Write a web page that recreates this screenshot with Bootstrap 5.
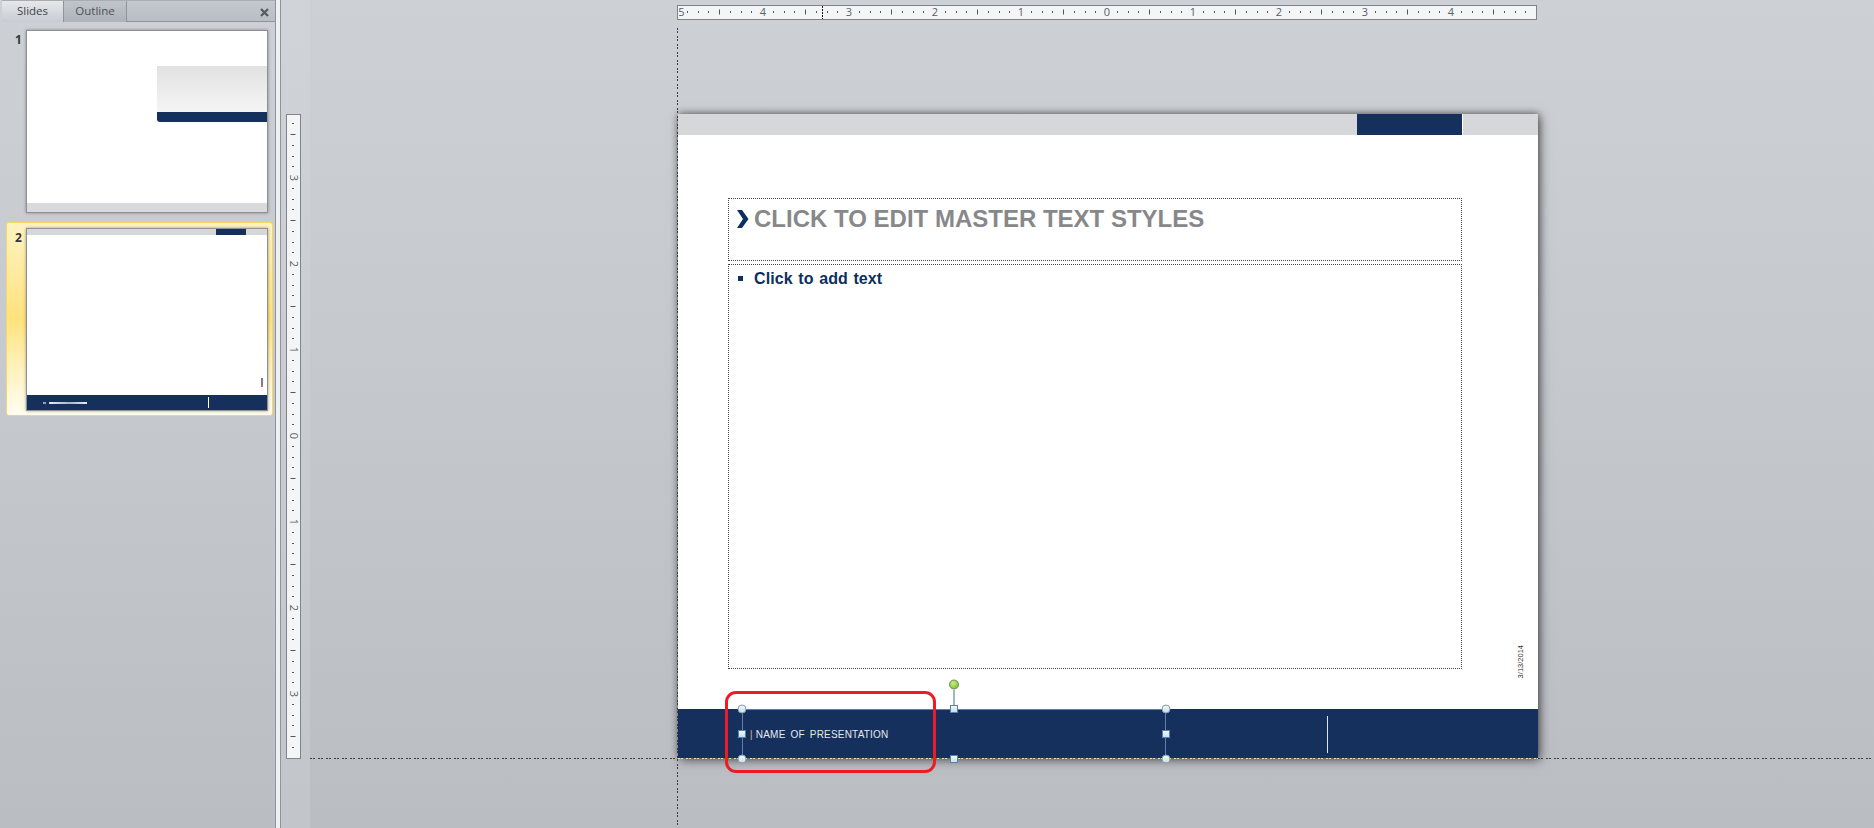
<!DOCTYPE html>
<html lang="en">
<head>
<meta charset="utf-8">
<title>Slide Master</title>
<link rel="stylesheet" href="https://cdn.jsdelivr.net/npm/bootstrap@5.3.0/dist/css/bootstrap.min.css">
<style>
html,body{height:100%;}
body{background:#c4c7cc;font-family:"Liberation Sans",Arial,sans-serif;overflow:hidden;}
.pp-app{height:828px;width:1874px;position:relative;}
.pp-side{width:276px;flex:none;background:linear-gradient(180deg,#cdd0d5 0,#c5c8cd 50%,#babdc2 100%);border-right:1px solid #8f949b;padding-left:2px;}
.pp-tabs{height:22px;background:linear-gradient(180deg,#c4c8ce,#b9bdc4);border-bottom:1px solid #90959c;border-top:1px solid #a9adb3;position:relative;flex:none;}
.pp-tab{font:11.5px "Open Sans",sans-serif;line-height:20px;height:21px;text-align:center;color:#3d434a;border-right:1px solid #8f949b;}
.pp-tab-on{width:62px;background:linear-gradient(180deg,#e6e8eb,#c8ccd2);margin-bottom:-1px;}
.pp-tab-off{width:63px;color:#4c525a;background:linear-gradient(180deg,#c0c5cb,#aeb3ba);}
.pp-close{margin-left:auto;margin-right:6px;width:9px;height:9px;margin-top:7px;}
.pp-num{font:bold 12px "Open Sans",sans-serif;color:#33363b;flex:none;}
.pp-row1{padding:8px 0 0 4px;height:194px;flex:none;}
.pp-num1{padding:1px 0 0 9px;width:20px;}
.pp-row2{margin:6px 2px 0 4px;height:194px;border:1px solid #f5d768;border-radius:3px;background:linear-gradient(180deg,#fff3c2 0,#ffe27e 50%,#fff0b4 72%,#fffdf2 100%);padding-top:5px;}
.pp-num2{padding:1px 0 0 8px;width:19px;}
.pp-thumb{width:242px;height:183px;background:#fff;border:1px solid #8d9197;box-shadow:0 0 3px rgba(0,0,0,.35);flex:none;}
.pp-t1-mid{height:181px;}
.pp-t1-hero{margin:35px 0 0 130px;height:46px;background:linear-gradient(180deg,#e1e1e1,#f5f5f5);}
.pp-t1-band{margin-left:130px;height:10px;background:#15305c;border-bottom-left-radius:3px;}
.pp-t1-foot{height:9px;margin-top:81px;background:#d9dadb;}
.pp-t2-top{height:6px;background:#d6d7d9;flex:none;}
.pp-t2-navy{width:30px;margin-left:189px;background:#15305c;height:6px;}
.pp-t2-mid{height:160px;flex:none;}
.pp-t2-date{width:2px;height:9px;background:linear-gradient(180deg,#6f7fa8,#a07a70);margin:143px 4px 0 auto;}
.pp-t2-foot{height:15px;flex:none;background:#15305c;color:#fff;}
.pp-t2-txt{width:44px;height:2px;margin-left:16px;background:linear-gradient(90deg,#8fa0bd 0,#8fa0bd 6%,#15305c 8%,#15305c 13%,#e8ebf1 15%,#aab5c8 60%,#e8ebf1 100%);}
.pp-t2-bar{width:1px;height:11px;background:#fff;margin-left:121px;}
.pp-split{width:5px;flex:none;background:#eef0f2;border-right:1px solid #8f949b;}
.pp-rulercol{width:29px;flex:none;background:linear-gradient(180deg,#d0d3d8,#c2c5ca);padding:114px 0 0 5px;}
.pp-vruler{width:15px;height:645px;background:#f4f5f6;border:1px solid #7f848b;display:block;}
.pp-canvas{flex-grow:1;background:linear-gradient(180deg,#cdd0d5 0,#c9ccd1 25%,#babdc2 100%);}
.pp-hruler{width:860px;height:15px;background:#f4f5f6;border:1px solid #7f848b;margin:5px 0 0 367px;display:block;box-sizing:border-box;}
.pp-rt{font:11px "Open Sans",sans-serif;fill:#5a5e66;}
.pp-slide{width:860px;height:644px;margin:94px 0 0 368px;background:#fff;box-shadow:2px 2px 10px rgba(0,0,0,.55),0 -1px 6px rgba(0,0,0,.3);}
.pp-top{height:21px;background:#d6d7d9;flex:none;}
.pp-top-navy{width:105px;margin-left:679px;background:#15305c;border-right:0;}
.pp-top-gap{width:1px;background:#fff;}
.pp-body{flex-grow:1;padding-left:50px;}
.pp-ph{width:734px;border:1px dotted #444;}
.pp-ph-title{height:63px;margin-top:63px;padding:7px 0 0 8px;font-weight:bold;font-size:24px;line-height:26px;color:#87888a;gap:5px;}
.pp-ph-body{height:405px;margin-top:3px;padding:4px 0 0 9px;font-weight:bold;font-size:16px;line-height:20px;color:#0b2f5f;word-spacing:1px;gap:11px;letter-spacing:.1px;}
.pp-bullet{width:5px;height:5px;background:#0b2f5f;flex:none;margin-top:7px;}
.pp-date{writing-mode:vertical-rl;transform:rotate(180deg);font-size:7.5px;line-height:9px;color:#3a3036;align-self:flex-end;margin:0 13px 31px auto;}
.pp-foot{height:49px;flex:none;background:#15305c;color:#e6e9ef;padding:1px 0 0 59px;font-size:10px;word-spacing:2px;letter-spacing:.2px;}
.pp-foot-bar{color:#d9a679;margin:0 3px 0 7px;font-size:11px;}
.pp-foot-line{width:1px;height:37px;background:#dfe5ef;margin:0 210px 0 auto;flex:none;}
.pp-overlay{position:absolute;inset:0;width:1874px;height:828px;pointer-events:none;}
.pp-note{position:absolute;left:725px;top:691px;width:211px;height:82px;border:3px solid #ed1c24;border-radius:11px;}
</style>
</head>
<body>
<div class="pp-app d-flex">
  <aside class="pp-side d-flex flex-column">
    <div class="pp-tabs d-flex">
      <div class="pp-tab pp-tab-on">Slides</div>
      <div class="pp-tab pp-tab-off">Outline</div>
      <svg class="pp-close" viewBox="0 0 9 9"><path d="M1 1 8 8M8 1 1 8" stroke="#555a61" stroke-width="2.2"/></svg>
    </div>
    <div class="pp-row1 d-flex">
      <div class="pp-num pp-num1">1</div>
      <div class="pp-thumb">
        <div class="pp-t1-mid">
          <div class="pp-t1-hero"></div>
          <div class="pp-t1-band"></div>
          <div class="pp-t1-foot"></div>
        </div>
      </div>
    </div>
    <div class="pp-row2 d-flex">
      <div class="pp-num pp-num2">2</div>
      <div class="pp-thumb d-flex flex-column">
        <div class="pp-t2-top"><div class="pp-t2-navy"></div></div>
        <div class="pp-t2-mid d-flex"><div class="pp-t2-date"></div></div>
        <div class="pp-t2-foot d-flex align-items-center"><div class="pp-t2-txt"></div><div class="pp-t2-bar"></div></div>
      </div>
    </div>
  </aside>
  <div class="pp-split"></div>
  <div class="pp-rulercol">
    <svg class="pp-vruler" width="15" height="645" viewBox="0 0 13 643">
      <defs>
        <pattern id="vt" width="15" height="86" patternUnits="userSpaceOnUse" patternTransform="translate(0,63)">
          <rect x="5" y="10" width="2" height="1" fill="#555"/><rect x="5" y="21" width="2" height="1" fill="#555"/><rect x="5" y="31" width="2" height="1" fill="#555"/>
          <rect x="3.5" y="42" width="5" height="1" fill="#555"/>
          <rect x="5" y="53" width="2" height="1" fill="#555"/><rect x="5" y="64" width="2" height="1" fill="#555"/><rect x="5" y="74" width="2" height="1" fill="#555"/>
        </pattern>
      </defs>
      <rect width="13" height="643" fill="url(#vt)"/>
      <text class="pp-rt" text-anchor="middle" transform="translate(2.5,63) rotate(90)">3</text>
      <text class="pp-rt" text-anchor="middle" transform="translate(2.5,149) rotate(90)">2</text>
      <text class="pp-rt" text-anchor="middle" transform="translate(2.5,235) rotate(90)">1</text>
      <text class="pp-rt" text-anchor="middle" transform="translate(2.5,321) rotate(90)">0</text>
      <text class="pp-rt" text-anchor="middle" transform="translate(2.5,407) rotate(90)">1</text>
      <text class="pp-rt" text-anchor="middle" transform="translate(2.5,493) rotate(90)">2</text>
      <text class="pp-rt" text-anchor="middle" transform="translate(2.5,579) rotate(90)">3</text>
    </svg>
  </div>
  <main class="pp-canvas">
    <svg class="pp-hruler" width="860" height="15" viewBox="0 0 858 13">
      <defs>
        <pattern id="ht" width="86" height="15" patternUnits="userSpaceOnUse" patternTransform="translate(-1,0)">
          <rect x="10" y="5" width="1" height="2" fill="#555"/><rect x="21" y="5" width="1" height="2" fill="#555"/><rect x="31" y="5" width="1" height="2" fill="#555"/>
          <rect x="42" y="3.5" width="1" height="5" fill="#555"/>
          <rect x="53" y="5" width="1" height="2" fill="#555"/><rect x="64" y="5" width="1" height="2" fill="#555"/><rect x="74" y="5" width="1" height="2" fill="#555"/>
        </pattern>
      </defs>
      <rect width="858" height="13" fill="url(#ht)"/>
      <rect x="0" y="4" width="8" height="6" fill="#f4f5f6"/>
      <g text-anchor="middle">
        <text class="pp-rt" x="3.5" y="10">5</text>
        <text class="pp-rt" x="85" y="10">4</text>
        <text class="pp-rt" x="171" y="10">3</text>
        <text class="pp-rt" x="257" y="10">2</text>
        <text class="pp-rt" x="343" y="10">1</text>
        <text class="pp-rt" x="429" y="10">0</text>
        <text class="pp-rt" x="515" y="10">1</text>
        <text class="pp-rt" x="601" y="10">2</text>
        <text class="pp-rt" x="687" y="10">3</text>
        <text class="pp-rt" x="773" y="10">4</text>
      </g>
      <path d="M144.5 0V13" stroke="#111" stroke-dasharray="2 1"/>
    </svg>
    <section class="pp-slide d-flex flex-column">
      <div class="pp-top d-flex">
        <div class="pp-top-navy"></div>
        <div class="pp-top-gap"></div>
      </div>
      <div class="pp-body d-flex">
        <div class="d-flex flex-column">
          <div class="pp-ph pp-ph-title d-flex align-items-start">
            <svg width="12" height="18" viewBox="0 0 12 18" class="flex-none mt-1"><path d="M0 0H5L11.5 9 5 18H0L6 9Z" fill="#0b2f5f"/></svg>
            <span class="pp-title-txt">CLICK TO EDIT MASTER TEXT STYLES</span>
          </div>
          <div class="pp-ph pp-ph-body d-flex align-items-start">
            <span class="pp-bullet"></span>
            <span>Click to add text</span>
          </div>
        </div>
        <div class="pp-date">3/13/2014</div>
      </div>
      <div class="pp-foot d-flex align-items-center">
        <span>1</span><span class="pp-foot-bar">|</span><span>NAME OF PRESENTATION</span>
        <div class="pp-foot-line"></div>
      </div>
    </section>
  </main>
  <svg class="pp-overlay" viewBox="0 0 1874 828">
    <defs>
      <linearGradient id="hg" x1="0" y1="0" x2="0" y2="1"><stop offset="0" stop-color="#f4fbfd"/><stop offset="1" stop-color="#bfe0ea"/></linearGradient>
      <radialGradient id="gg" cx=".4" cy=".35" r=".7"><stop offset="0" stop-color="#c9f07a"/><stop offset="1" stop-color="#76c02c"/></radialGradient>
    </defs>
    <path d="M677.5 28V828" stroke="#3a3d42" stroke-dasharray="2 1 2 3" fill="none"/>
    <path d="M310 758.5H678" stroke="#3a3d42" stroke-dasharray="2 1 2 3" fill="none"/>
    <path d="M678 758.5H1538" stroke="#efdcb6" stroke-dasharray="2 1 2 3" fill="none"/>
    <path d="M1538 758.5H1874" stroke="#3a3d42" stroke-dasharray="2 1 2 3" fill="none"/>
    <path d="M742.5 709.5H1166.5M742.5 709.5V759M1165.5 709.5V759" stroke="#5f7fa6" fill="none"/>
    <path d="M954 690V705" stroke="#a3b3cb" stroke-width="2"/>
    <circle cx="954" cy="684.5" r="4.5" fill="url(#gg)" stroke="#6f8a62"/>
    <g fill="url(#hg)" stroke="#8d9aa8">
      <circle cx="742" cy="709" r="4"/><circle cx="1166" cy="709" r="4"/>
      <circle cx="742" cy="759" r="4"/><circle cx="1166" cy="759" r="4"/>
    </g>
    <g fill="url(#hg)" stroke="#5f7fa6">
      <rect x="950.5" y="705.5" width="7" height="7"/>
      <rect x="738.5" y="730.5" width="7" height="7"/>
      <rect x="1162.5" y="730.5" width="7" height="7"/>
      <rect x="950.5" y="755.5" width="7" height="7"/>
    </g>
  </svg>
  <div class="pp-note"></div>
</div>
<script src="https://cdn.jsdelivr.net/npm/bootstrap@5.3.0/dist/js/bootstrap.bundle.min.js"></script>
</body>
</html>
